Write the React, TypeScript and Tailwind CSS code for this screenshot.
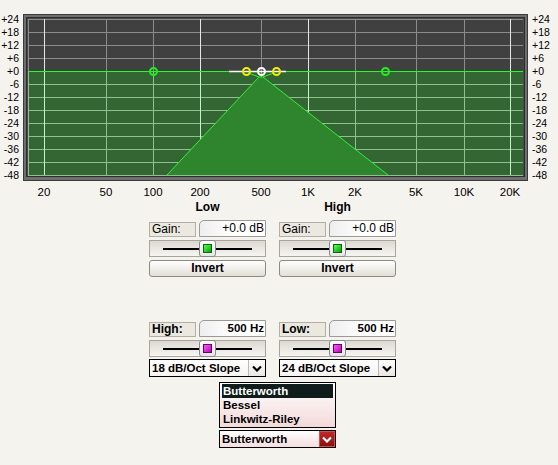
import React from "react";

const FREQS = [
  { label: "20", x: 44, bright: true },
  { label: "50", x: 106 },
  { label: "100", x: 153 },
  { label: "200", x: 200, bright: true },
  { label: "500", x: 261 },
  { label: "1K", x: 308, bright: true },
  { label: "2K", x: 355 },
  { label: "5K", x: 416 },
  { label: "10K", x: 464 },
  { label: "20K", x: 510, bright: true },
];

const DB = ["+24", "+18", "+12", "+6", "+0", "-6", "-12", "-18", "-24", "-30", "-36", "-42", "-48"];

function Chart() {
  const top = 19;
  const zero = 71;
  const bottom = 175;
  const left = 28;
  const right = 523;
  return (
    <svg width={558} height={200} className="block" style={{ fontFamily: "'Liberation Sans', Arial, sans-serif" }}>
      {/* frame */}
      <rect x={23} y={14} width={505} height={167} fill="#3a3a3a" />
      <rect x={24} y={15} width={503} height={165} fill="#6f6f6f" />
      <rect x={26} y={17} width={499} height={160} fill="#2c2c2c" />
      <rect x={27} y={18} width={497} height={158} fill="#4a4a4a" />
      {/* plot */}
      <rect x={left} y={top} width={right - left} height={zero - top} fill="#404040" />
      <rect x={left} y={zero} width={right - left} height={bottom - zero} fill="#336633" />

      {DB.map((_, i) => {
        const y = top + i * 13 + 0.5;
        if (i === 4) return null;
        return (
          <line key={i} x1={left} x2={right} y1={y} y2={y} stroke={i < 4 ? "#8c8c8c" : "#8fc08f"} strokeWidth={1} />
        );
      })}
      <line x1={left + 0.5} x2={left + 0.5} y1={top} y2={zero} stroke="#8c8c8c" />
      <line x1={left + 0.5} x2={left + 0.5} y1={zero} y2={bottom} stroke="#8fc08f" />
      {FREQS.map((f) => (
        <g key={f.label}>
          <line x1={f.x + 0.5} x2={f.x + 0.5} y1={top} y2={zero} stroke={f.bright ? "#e6e6e6" : "#8c8c8c"} />
          <line x1={f.x + 0.5} x2={f.x + 0.5} y1={zero} y2={bottom} stroke={f.bright ? "#c8f0c8" : "#8fc08f"} />
        </g>
      ))}

      {/* filter curve */}
      <polygon points="167,175 259,77 263,77 388,175" fill="#2e852e" />
      <polyline points="167,175 259,77 263,77 388,175" fill="none" stroke="#33ee33" strokeWidth={1} />
      <polyline points="248,73 259,77" fill="none" stroke="#33ee33" />
      <polyline points="274,73 263,77" fill="none" stroke="#33ee33" />

      <line x1={left} x2={right} y1={zero + 0.5} y2={zero + 0.5} stroke="#22ff22" />
      <line x1={229} x2={286} y1={zero + 0.5} y2={zero + 0.5} stroke="#f0fff0" strokeWidth={1.5} />

      <circle cx={153.5} cy={71.5} r={3.5} fill="none" stroke="#22ee22" strokeWidth={2} />
      <circle cx={385.5} cy={71.5} r={3.5} fill="none" stroke="#22ee22" strokeWidth={2} />
      <circle cx={246.5} cy={71.5} r={3.5} fill="none" stroke="#f0f000" strokeWidth={2} />
      <circle cx={276.5} cy={71.5} r={3.5} fill="none" stroke="#f0f000" strokeWidth={2} />
      <circle cx={261.5} cy={71.5} r={3.5} fill="none" stroke="#ffffff" strokeWidth={2} />

      {DB.map((d, i) => (
        <g key={d}>
          <text x={19} y={top + i * 13 + 4} fontSize={10.5} textAnchor="end" fill="#000">
            {d}
          </text>
          <text x={532} y={top + i * 13 + 4} fontSize={10.5} textAnchor="start" fill="#000">
            {d}
          </text>
        </g>
      ))}
      {FREQS.map((f) => (
        <text key={f.label} x={f.x} y={196} fontSize={11.5} textAnchor="middle" fill="#000">
          {f.label}
        </text>
      ))}
    </svg>
  );
}

function Chevron({ color }: { color: string }) {
  return (
    <svg width="10" height="7" viewBox="0 0 10 7">
      <polyline points="1,1.5 5,5.5 9,1.5" fill="none" stroke={color} strokeWidth="2.2" />
    </svg>
  );
}

function ValueRow({ label, value, boldLabel }: { label: string; value: string; boldLabel?: boolean }) {
  return (
    <div className="flex h-[17px] items-end gap-[3px]">
      <div
        className={`h-[15px] w-[47px] border border-[#b3afa5] bg-[#ebe8e0] pl-[2px] text-[12px] leading-[13px] ${
          boldLabel ? "font-bold" : ""
        }`}
      >
        {label}
      </div>
      <div
        className={`h-[17px] w-[67px] rounded-tl-[5px] border border-[#9c9a94] bg-gradient-to-r from-[#eeeeee] via-white to-white pr-[1px] text-right leading-[15px] ${
          boldLabel ? "text-[11.5px] font-bold" : "text-[12px]"
        }`}
      >
        {value}
      </div>
    </div>
  );
}

function Slider({ color }: { color: "green" | "magenta" }) {
  const inner =
    color === "green"
      ? "border-[#0a6a0a] bg-gradient-to-br from-[#55ff55] to-[#00a000]"
      : "border-[#6a006a] bg-gradient-to-br from-[#ff55ff] to-[#b000b0]";
  return (
    <div className="flex h-[17px] items-center border border-[#a8a59d] bg-gradient-to-b from-[#dcd9d1] to-[#f6f5f1] pl-[13px]">
      <div className="h-[2px] w-[36px] bg-black" />
      <div className="-my-[1px] flex h-[17px] w-[17px] items-center justify-center rounded-[3px] border border-[#8a8a8a] bg-gradient-to-b from-white to-[#e6e6e6]">
        <div className={`h-[9px] w-[9px] border ${inner}`} />
      </div>
      <div className="h-[2px] w-[36px] bg-black" />
    </div>
  );
}

function Select({ value }: { value: string }) {
  return (
    <div className="flex h-[18px] border border-black bg-gradient-to-b from-white to-[#f6f3ef]">
      <div className="flex-1 pl-[2px] text-[11.5px] font-bold leading-[16px]">{value}</div>
      <div className="flex w-[17px] items-center justify-center border-l border-[#b8b8b8] bg-gradient-to-b from-white to-[#e8e6e2]">
        <Chevron color="#000" />
      </div>
    </div>
  );
}

function Column({
  title,
  cutLabel,
  slope,
}: {
  title: string;
  cutLabel: string;
  slope: string;
}) {
  return (
    <div className="flex w-[117px] flex-col">
      <div className="h-[14px] text-center text-[12px] font-bold leading-[14px]">{title}</div>
      <div className="mt-[6px]">
        <ValueRow label="Gain:" value="+0.0 dB" />
      </div>
      <div className="mt-[3px]">
        <Slider color="green" />
      </div>
      <button className="mt-[3px] h-[17px] rounded-[3px] border border-[#8d8a82] bg-gradient-to-b from-white to-[#e2dfd7] text-[12px] font-bold leading-[15px]">
        Invert
      </button>
      <div className="mt-[43px]">
        <ValueRow label={cutLabel} value="500 Hz" boldLabel />
      </div>
      <div className="mt-[3px]">
        <Slider color="magenta" />
      </div>
      <div className="mt-[2px]">
        <Select value={slope} />
      </div>
    </div>
  );
}

export default function App() {
  return (
    <div className="h-[465px] w-[558px] overflow-hidden bg-[#f5f3ee] font-['Liberation_Sans',Arial,sans-serif] text-black">
      <Chart />
      <div className="ml-[149px] flex gap-[13px]">
        <Column title="Low" cutLabel="High:" slope="18 dB/Oct Slope" />
        <Column title="High" cutLabel="Low:" slope="24 dB/Oct Slope" />
      </div>
      <div className="ml-[219px] mt-[5px] w-[117px]">
        <div className="border border-black bg-gradient-to-b from-white to-[#f3d9d9] px-[2px] py-[1px] text-[11.5px] font-bold leading-[14px]">
          <div className="bg-[#0f1c1c] pl-[1px] text-white">Butterworth</div>
          <div className="pl-[1px]">Bessel</div>
          <div className="pl-[1px]">Linkwitz-Riley</div>
        </div>
        <div className="mt-[2px] flex h-[18px] border border-black bg-gradient-to-b from-white to-[#f5dede]">
          <div className="flex-1 pl-[2px] text-[11.5px] font-bold leading-[16px]">Butterworth</div>
          <div className="flex w-[16px] items-center justify-center border border-[#d05050] bg-gradient-to-b from-[#c02828] to-[#8a1010]">
            <Chevron color="#fff" />
          </div>
        </div>
      </div>
    </div>
  );
}
